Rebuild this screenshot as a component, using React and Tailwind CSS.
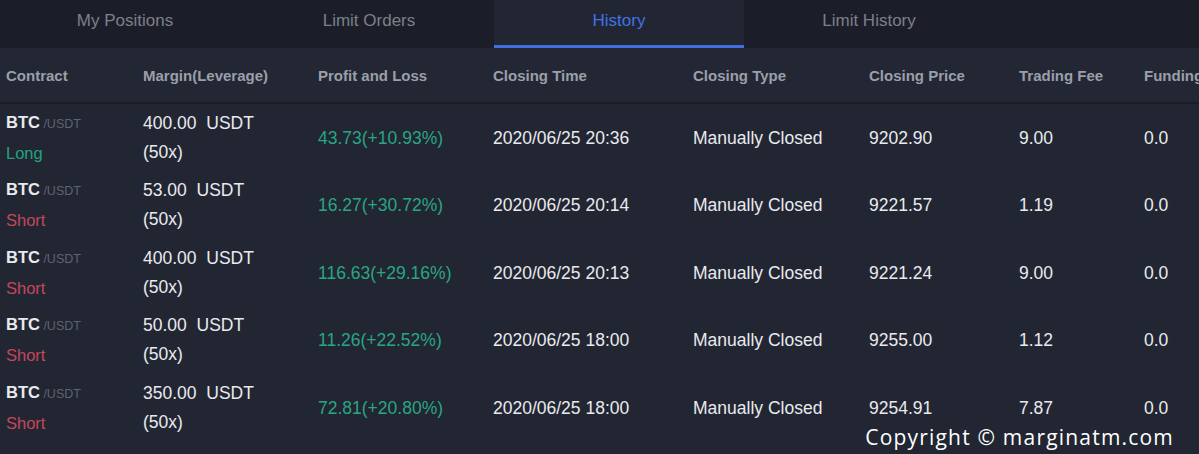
import React from 'react';

const tabs = ['My Positions', 'Limit Orders', 'History', 'Limit History'];

const columns = [
  { title: 'Contract', w: 'w-[137px]' },
  { title: 'Margin(Leverage)', w: 'w-[175px]' },
  { title: 'Profit and Loss', w: 'w-[175px]' },
  { title: 'Closing Time', w: 'w-[200px]' },
  { title: 'Closing Type', w: 'w-[176px]' },
  { title: 'Closing Price', w: 'w-[150px]' },
  { title: 'Trading Fee', w: 'w-[125px]' },
  { title: 'Funding Fee', w: 'w-[120px]' },
];

const rows = [
  { side: 'Long', margin: '400.00', pnl: '43.73(+10.93%)', time: '2020/06/25 20:36', price: '9202.90', fee: '9.00' },
  { side: 'Short', margin: '53.00', pnl: '16.27(+30.72%)', time: '2020/06/25 20:14', price: '9221.57', fee: '1.19' },
  { side: 'Short', margin: '400.00', pnl: '116.63(+29.16%)', time: '2020/06/25 20:13', price: '9221.24', fee: '9.00' },
  { side: 'Short', margin: '50.00', pnl: '11.26(+22.52%)', time: '2020/06/25 18:00', price: '9255.00', fee: '1.12' },
  { side: 'Short', margin: '350.00', pnl: '72.81(+20.80%)', time: '2020/06/25 18:00', price: '9254.91', fee: '7.87' },
];

const App = () => {
  return (
    <div className="relative w-[1199px] h-[454px] overflow-hidden bg-[#222632] font-[family-name:'Liberation_Sans',Arial,sans-serif]">
      <div className="flex h-[48px] bg-[#1b1e28]">
        {tabs.map((tab, i) => {
          const active = tab === 'History';
          return (
            <div
              key={tab}
              className={`${i === 0 ? 'w-[244px] pl-[6px]' : 'w-[250px]'} h-[48px] flex justify-center text-[17px] leading-[41px] ${
                active
                  ? 'bg-[#222632] text-[#3f74e6] border-b-[3px] border-[#3f6fe0]'
                  : 'text-[#7c808b]'
              }`}
            >
              {tab}
            </div>
          );
        })}
      </div>

      <div className="flex h-[56px] items-center pl-[6px] pt-[3px] bg-[#232734] border-b-2 border-[#1a1d25] whitespace-nowrap">
        {columns.map((col) => (
          <div key={col.title} className={`${col.w} shrink-0 text-[15px] font-bold text-[#9b9fa9]`}>
            {col.title}
          </div>
        ))}
      </div>

      {rows.map((row, i) => (
        <div key={i} className="flex h-[67.5px] items-center pl-[6px] text-[17.5px] text-[#e9eaee] whitespace-nowrap">
          <div className="w-[137px] shrink-0 leading-[29px]">
            <div>
              <span className="text-[16.5px] font-bold">BTC</span>
              <span className="text-[12.5px] text-[#5e6371]"> /USDT</span>
            </div>
            <div className={`text-[16.5px] ${row.side === 'Long' ? 'text-[#22a27c]' : 'text-[#c4475c]'}`}>
              {row.side}
            </div>
          </div>
          <div className="w-[175px] shrink-0 leading-[29px]">
            <div>{row.margin}&nbsp; USDT</div>
            <div>(50x)</div>
          </div>
          <div className="w-[175px] shrink-0 text-[#29a583]">{row.pnl}</div>
          <div className="w-[200px] shrink-0">{row.time}</div>
          <div className="w-[176px] shrink-0">Manually Closed</div>
          <div className="w-[150px] shrink-0">{row.price}</div>
          <div className="w-[125px] shrink-0">{row.fee}</div>
          <div className="w-[120px] shrink-0">0.0</div>
        </div>
      ))}

      <div className="absolute right-[25px] bottom-[1px] text-[21px] tracking-[1.2px] text-white font-[family-name:'Open_Sans',sans-serif]">
        Copyright © marginatm.com
      </div>
    </div>
  );
};

export default App;
